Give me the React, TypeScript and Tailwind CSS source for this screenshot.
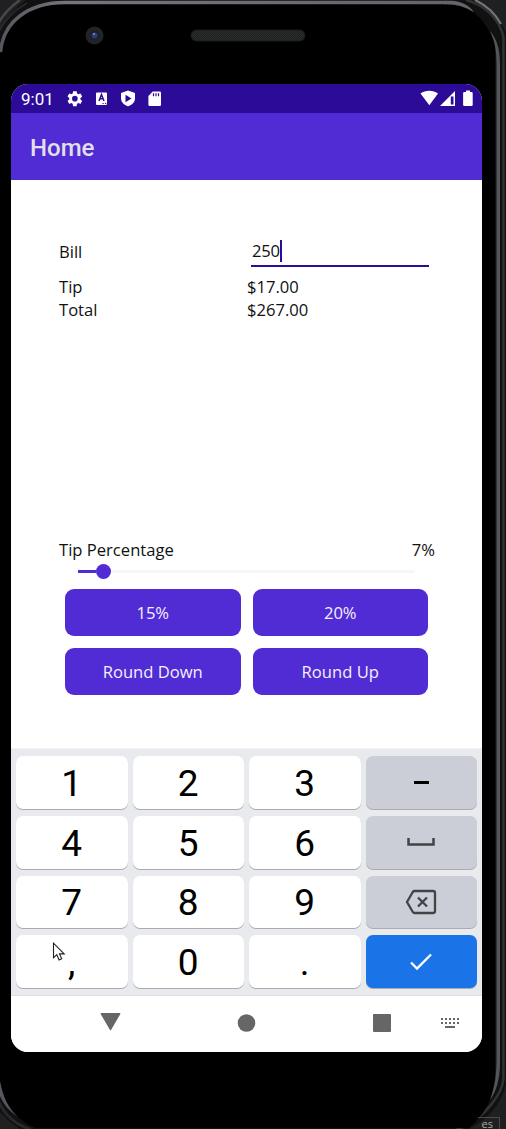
import type { ReactNode } from "react";

function PhoneFrame() {
  return (
    <svg className="absolute inset-0" width="506" height="1129" viewBox="0 0 506 1129" fill="none" aria-hidden="true">
      <defs>
        <pattern id="mesh" width="2" height="2" patternUnits="userSpaceOnUse">
          <rect width="2" height="2" fill="#202121" />
          <rect width="1" height="1" fill="#2a2c2c" />
          <rect x="1" y="1" width="1" height="1" fill="#2a2c2c" />
        </pattern>
        <linearGradient id="rim" x1="0" x2="1">
          <stop stopColor="#55565f" />
          <stop offset=".15" stopColor="#77747d" />
          <stop offset="1" stopColor="#66636b" />
        </linearGradient>
      </defs>
      <rect width="506" height="1129" fill="#202022" />
      <path d="M-4 40Q4 14 30 -3H464C484 3 497 15 506 32V1085C499 1109 484 1123 462 1132H28C14 1128 6 1118 -4 1108z" fill="#111" />
      <path d="M-1 22Q6 10 20 0" stroke="#484849" strokeWidth="2.500" />
      <path d="M-1 31Q8 14 27 3" stroke="#292929" strokeWidth="2" />
      <path d="M466 0C485 5 499 18 503.500 37V1078C503 1092 486 1119 456 1130" stroke="#323234" strokeWidth="2.500" />
      <path d="M475 0C486 5 495 13 501 24" stroke="#77777a" strokeWidth="2" />
      <path d="M-1 1102C5 1116 15 1124 31 1130" stroke="#29292a" strokeWidth="3" />
      <path d="M0 48C6 20 31 3 62 3H447C461 3 470 7 474 12C483 20 490 31 495 44V1078C493 1097 486 1114 469 1128H36C16 1120 5 1104 0 1085z" fill="#000" />
      <path d="M.5 52C3 22 28 2.500 65 2.500H446" stroke="url(#rim)" strokeWidth="3.500" />
      <path d="M445 .8H452C464 2 471 7 474 12.500C465 7 458 4.300 445 4.300z" fill="#66636b" />
      <path d="M490 31C497 39 500 49 500 65V1062C500 1080 496 1092 490 1100C495 1086 496.500 1074 496.500 1060V66C496.500 50 495 42 490 31z" fill="#555459" />
      <path d="M0 1081C3 1097 8 1108 18 1117C8 1110 3 1104 -1 1094z" fill="#555660" />
      <rect x="191" y="30" width="114" height="11" rx="5.500" fill="url(#mesh)" stroke="#191a1a" />
      <circle cx="94.500" cy="35.500" r="9" fill="#242424" />
      <circle cx="94.500" cy="35.500" r="5" fill="#171e39" />
      <circle cx="94.500" cy="35.500" r="3" fill="#2e3c70" />
      <circle cx="94" cy="34" r="1" fill="#8295bd" />
    </svg>
  );
}

function StatusBar() {
  return (
    <div className="flex h-[29px] shrink-0 items-center bg-[#2b0b98] pl-[10px] font-[Roboto] text-white">
      <span className="w-[42px] pt-px text-[17px] leading-none">9:01</span>
      <svg width="105" height="29" viewBox="0 0 105 29" fill="none">
        <g fill="#fff">
          <path transform="translate(2.500 5.300) scale(.78)" d="M19.140 12.940c.04-.3.060-.610.060-.940s-.02-.640-.07-.940l2.030-1.580c.18-.14.230-.41.120-.610l-1.920-3.320c-.12-.22-.37-.29-.59-.22l-2.390.96c-.5-.38-1.030-.7-1.620-.94l-.36-2.540c-.04-.24-.24-.41-.48-.41h-3.840c-.24 0-.43.17-.47.41l-.36 2.540c-.59.24-1.130.57-1.620.94l-2.390-.96c-.22-.08-.47 0-.59.22L2.740 8.870c-.12.210-.08.470.12.610l2.030 1.580c-.05.3-.09.630-.09.940s.02.640.07.940l-2.030 1.580c-.18.140-.23.410-.12.610l1.920 3.320c.12.220.37.290.59.220l2.390-.96c.5.380 1.030.7 1.620.94l.36 2.540c.05.240.24.410.48.410h3.840c.24 0 .44-.17.470-.41l.36-2.540c.59-.24 1.130-.56 1.620-.94l2.390.96c.22.080.47 0 .59-.22l1.920-3.320c.12-.22.070-.47-.12-.61l-2.010-1.580zM12 15.600A3.600 3.600 0 1 1 12 8.400a3.600 3.600 0 0 1 0 7.200z" />
          <rect x="33" y="8.500" width="11" height="12.500" rx="1" />
          <path d="M65 6.500l7 2.500v5.300c0 4-3 6.700-7 8-4-1.300-7-4-7-8V9z" />
          <path d="M89.700 7.500h7A1.300 1.300 0 0 1 98 8.800v12a1.300 1.300 0 0 1-1.300 1.300h-10a1.300 1.300 0 0 1-1.300-1.300V12z" />
        </g>
        <path d="M36 17l2.500-6.500L41 17M37 14.800h3" stroke="#2b0b98" strokeWidth="1.500" />
        <path d="M39.500 19.500h1.200M42 19.500h1.200" stroke="#2b0b98" strokeWidth="1" />
        <path d="M62.500 10.700l6 3.800-6 3.800z" fill="#2b0b98" />
        <path d="M90.500 9.200v3M93 9.200v3M95.500 9.200v3" stroke="#2b0b98" strokeWidth="1.200" />
      </svg>
      <svg className="ml-auto mr-[8px]" width="54" height="29" viewBox="0 0 54 29" fill="none">
        <path d="M.5 9.500C5.500 5.700 13 5.700 18 9.500L9.300 21.200z" fill="#fff" />
        <path d="M20 22L35 7v15z" fill="#fff" />
        <path d="M30.800 12.500h2.700v8h-2.700z" fill="#2b0b98" />
        <path d="M46 6.500h4V8h1.500q1.200 0 1.200 1.200v11.600q0 1.200-1.200 1.200h-7.200q-1.200 0-1.200-1.200V9.200Q43.100 8 44.300 8H46z" fill="#fff" />
      </svg>
    </div>
  );
}

function TipButton({ children }: { children: ReactNode }) {
  return (
    <button className="h-[47px] rounded-[9px] bg-[#512bd4] pt-[2px] text-[16.600px] leading-none text-[#f4f0ff]">{children}</button>
  );
}

function TipCalculator() {
  return (
    <main className="h-[568px] shrink-0 pl-12 font-['Open_Sans'] text-[16.600px] leading-[23px] text-[#111]">
      <div className="flex h-[95px] pt-[54px]">
        <span className="w-[192px] pt-[6px]">Bill</span>
        <div className="flex h-[33px] w-[178px] border-b-2 border-[#2b0b98] pt-[6px]">
          <span className="pl-px leading-[22px] tracking-[-0.2px]">250</span>
          <span className="h-[22px] w-[2px] bg-[#2b0b98]" />
        </div>
      </div>
      <dl className="grid grid-cols-[188px_1fr]">
        <dt>Tip</dt><dd>$17.00</dd>
        <dt>Total</dt><dd>$267.00</dd>
      </dl>
      <div className="mt-[217px] flex w-[376px] justify-between">
        <span>Tip Percentage</span><span>7%</span>
      </div>
      <div className="ml-[19px] flex h-[20px] w-[337px] items-center">
        <span className="h-[3px] w-[18px] bg-[#512bd4]" />
        <span className="size-[15px] rounded-full bg-[#512bd4]" />
        <span className="h-[3px] flex-1 bg-[#f7f7f7]" />
      </div>
      <div className="mt-[7.500px] ml-[6px] grid w-[363px] grid-cols-2 gap-3">
        <TipButton>15%</TipButton>
        <TipButton>20%</TipButton>
        <TipButton>Round Down</TipButton>
        <TipButton>Round Up</TipButton>
      </div>
    </main>
  );
}

function Key({ children, tone = "bg-white", className = "" }: { children: ReactNode; tone?: string; className?: string }) {
  return (
    <button className={`flex items-center justify-center rounded-[7px] shadow-[0_1px_0_#a9abae] ${tone} ${className}`}>
      {children}
    </button>
  );
}

function NumberKey({ children }: { children: ReactNode }) {
  return <Key className="pt-[2px]">{children}</Key>;
}

function Keypad() {
  return (
    <div className="grid h-[247px] shrink-0 grid-cols-4 grid-rows-4 gap-x-[5px] gap-y-[7px] border-t border-[#f2f2f4] bg-[#e8eaed] px-[5px] pt-[7px] pb-[7px] font-[Roboto] text-[37px] leading-none text-black">
      <NumberKey>1</NumberKey><NumberKey>2</NumberKey><NumberKey>3</NumberKey>
      <Key tone="bg-[#cbced6]"><span className="h-[3px] w-[15px] bg-black" /></Key>
      <NumberKey>4</NumberKey><NumberKey>5</NumberKey><NumberKey>6</NumberKey>
      <Key tone="bg-[#cbced6]">
        <svg width="28" height="10" viewBox="0 0 28 10" fill="none"><path d="M1.500 1v6.500h25V1" stroke="#414346" strokeWidth="2.500" /></svg>
      </Key>
      <NumberKey>7</NumberKey><NumberKey>8</NumberKey><NumberKey>9</NumberKey>
      <Key tone="bg-[#cbced6]" className="pt-px">
        <svg width="32" height="26" viewBox="0 0 32 26" fill="none" stroke="#414346">
          <path d="M9.500 2H28q2 0 2 2v18q0 2-2 2H9.500q-1 0-1.700-1L2 13l5.800-10q.7-1 1.700-1z" strokeWidth="2.300" />
          <path d="M13 8.500l9 9m0-9l-9 9" strokeWidth="2.300" />
        </svg>
      </Key>
      <NumberKey>,</NumberKey><NumberKey>0</NumberKey><NumberKey>.</NumberKey>
      <Key tone="bg-[#1b73e8]">
        <svg width="22" height="18" viewBox="0 0 22 18" fill="none"><path d="M1 9.500l6 6L21 1.500" stroke="#fff" strokeWidth="2.300" /></svg>
      </Key>
    </div>
  );
}

function NavigationBar() {
  return (
    <div className="h-[57px] shrink-0 border-t border-[#dedfe1] bg-white">
      <svg width="471" height="56" viewBox="0 0 471 56" fill="#666">
        <path d="M90.500 17h18q1.300 0 .7 1.200l-9 15.500q-.7 1-1.400 0l-9-15.500Q89.200 17 90.500 17z" />
        <circle cx="235.500" cy="27" r="8.800" />
        <rect x="362" y="18" width="18" height="18" rx="1" />
        <path d="M430 22h2v2h-2zm4 0h2v2h-2zm4 0h2v2h-2zm4 0h2v2h-2zm4 0h2v2h-2zM430 26h2v2h-2zm4 0h2v2h-2zm4 0h2v2h-2zm4 0h2v2h-2zm4 0h2v2h-2zM434 30h10v2h-10z" />
      </svg>
    </div>
  );
}

export default function App() {
  return (
    <div className="relative h-[1129px] w-[506px] overflow-hidden bg-black pt-[84px] pl-[11px]">
      <PhoneFrame />
      <div className="relative flex h-[968px] w-[471px] flex-col overflow-hidden rounded-[17px] bg-white">
        <StatusBar />
        <header className="flex h-[67px] shrink-0 items-center bg-[#512bd4] pt-[3px] pl-[19px] font-[Roboto] text-[24px] font-medium text-[#e2e0e5]">Home</header>
        <TipCalculator />
        <Keypad />
        <NavigationBar />
      </div>
      <svg className="absolute top-[942px] left-[52px]" width="14" height="20" viewBox="0 0 14 20" fill="#fff" stroke="#222" strokeWidth="1.100">
        <path d="M1.500 1.200v14.500l3.300-3 2.300 5.300 2.600-1.200-2.200-4.900h4.700z" />
      </svg>
      <div className="absolute right-[6px] bottom-0 flex h-[12px] items-end border-t border-r border-[#49494b] pr-[6px] pl-[4px] font-['Open_Sans'] text-[11px] leading-[11px] text-[#aaa]">es</div>
    </div>
  );
}
